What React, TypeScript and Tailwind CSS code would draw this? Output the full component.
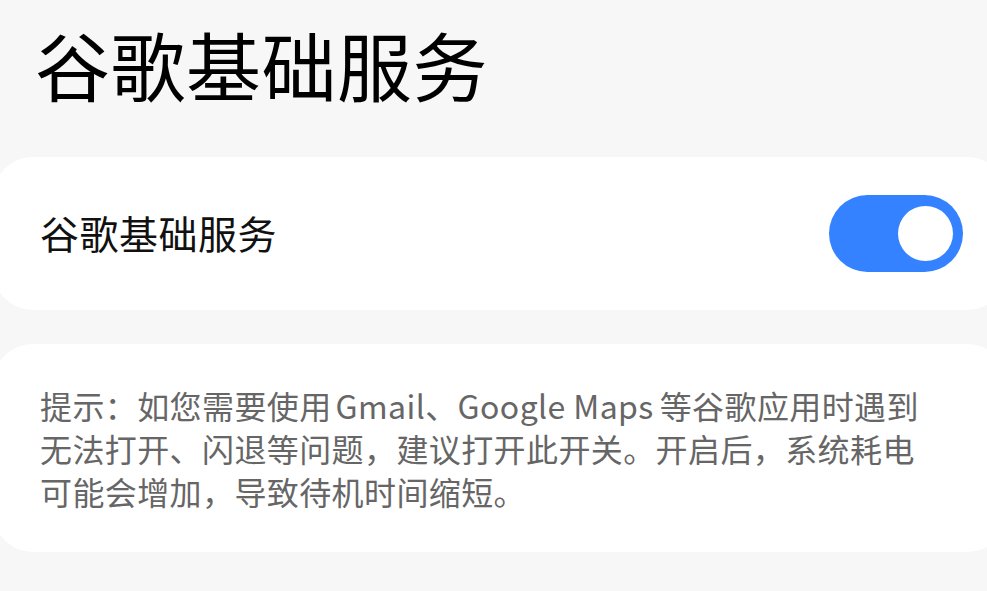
import React from "react";

export default function App() {
  const cjk = { fontFamily: '"Noto Sans CJK SC", "Noto Sans", sans-serif' };
  return (
    <div
      className="w-[987px] h-[591px] overflow-hidden bg-[#f7f7f7]"
      style={cjk}
    >
      <div className="pl-[35px] pt-[26px] h-[157px]">
        <h1 className="text-[75px] leading-[75px] font-normal text-black tracking-[0.5px]">
          谷歌基础服务
        </h1>
      </div>

      <div className="-ml-[7px] w-[1014px] h-[153px] bg-white rounded-[40px] flex items-center justify-between pl-[47px] pr-[44px]">
        <span className="text-[39px] leading-[39px] text-[#111] pb-[2px] tracking-[0.5px]">
          谷歌基础服务
        </span>
        <div className="w-[134px] h-[77px] rounded-full bg-[#3482ff] flex items-center justify-end pr-[10px]">
          <div className="w-[55px] h-[55px] rounded-full bg-white" />
        </div>
      </div>

      <div className="-ml-[7px] mt-[34px] w-[1014px] h-[208px] bg-white rounded-[40px] pl-[47px] pt-[40px]">
        <p className="text-[32px] leading-[43px] text-[#666] whitespace-nowrap tracking-[0.4px]">
          提示：如您需要使用<span className="ml-[4px]">Gmail</span>、Google Maps
          <span className="ml-[6px]">等谷歌应用时遇到</span>
          <br />
          无法打开、闪退等问题，建议打开此开关。开启后，系统耗电
          <br />
          可能会增加，导致待机时间缩短。
        </p>
      </div>
    </div>
  );
}
